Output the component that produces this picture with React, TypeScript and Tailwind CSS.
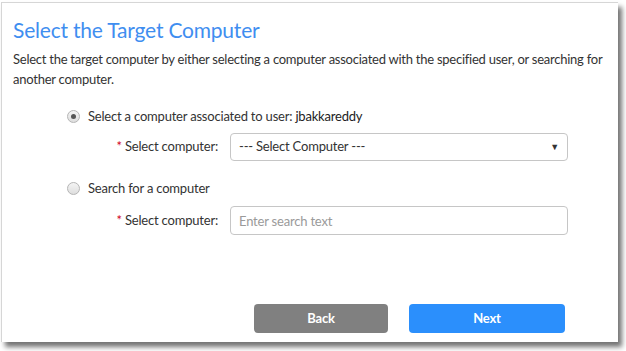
function Radio({ checked }: { checked?: boolean }) {
  return (
    <span className="flex h-[13px] w-[13px] items-center justify-center rounded-full border border-[#b5b5b5] bg-gradient-to-b from-[#f4f4f4] to-[#dedede]">
      {checked && <span className="h-[5px] w-[5px] rounded-full bg-[#555]" />}
    </span>
  );
}

function FieldLabel() {
  return (
    <label className="w-[142px] pr-3 text-right">
      <span className="text-[#d0021b]">*</span> Select computer:
    </label>
  );
}

export default function App() {
  return (
    <div className="h-[351px] w-[626px] bg-white pl-[1px] pt-[2px] font-['Lato',sans-serif] text-[13px] tracking-[-0.2px] text-[#333]">
      <div className="flex h-[340px] w-[617px] flex-col border-l border-t border-[#d6d6d6] bg-white px-[11px] shadow-[4px_5px_5px_rgba(0,0,0,0.55)]">
        <h1 className="mt-[12px] text-[21px] leading-[30px] tracking-[-0.2px] text-[#3f8ef0]">Select the Target Computer</h1>
        <p className="mt-[4px] leading-[20px] tracking-[-0.25px]">
          Select the target computer by either selecting a computer associated with the specified user, or searching for another computer.
        </p>

        <div className="mt-[18px] flex items-center gap-[8px] pl-[54px]">
          <Radio checked />
          <span>
            Select a computer associated to user: <span className="text-[#222]">jbakkareddy</span>
          </span>
        </div>
        <div className="mt-[6px] flex items-center pl-[75px]">
          <FieldLabel />
          <div className="flex h-[28px] w-[338px] items-center justify-between rounded-[4px] border border-[#c6c6c6] px-[8px]">
            <span>--- Select Computer ---</span>
            <span className="text-[9px]">▼</span>
          </div>
        </div>

        <div className="mt-[18px] flex items-center gap-[8px] pl-[54px]">
          <Radio />
          <span>Search for a computer</span>
        </div>
        <div className="mt-[8px] flex items-center pl-[75px]">
          <FieldLabel />
          <input
            className="h-[29px] w-[338px] rounded-[4px] border border-[#c6c6c6] px-[8px] outline-none placeholder:text-[#9a9a9a]"
            placeholder="Enter search text"
          />
        </div>

        <div className="mt-auto mb-[9px] flex gap-[21px] pl-[241px]">
          <button className="h-[29px] w-[134px] rounded-[4px] bg-[#808080] font-bold text-white">Back</button>
          <button className="h-[29px] w-[156px] rounded-[4px] bg-[#2b8ffc] font-bold text-white">Next</button>
        </div>
      </div>
    </div>
  );
}
